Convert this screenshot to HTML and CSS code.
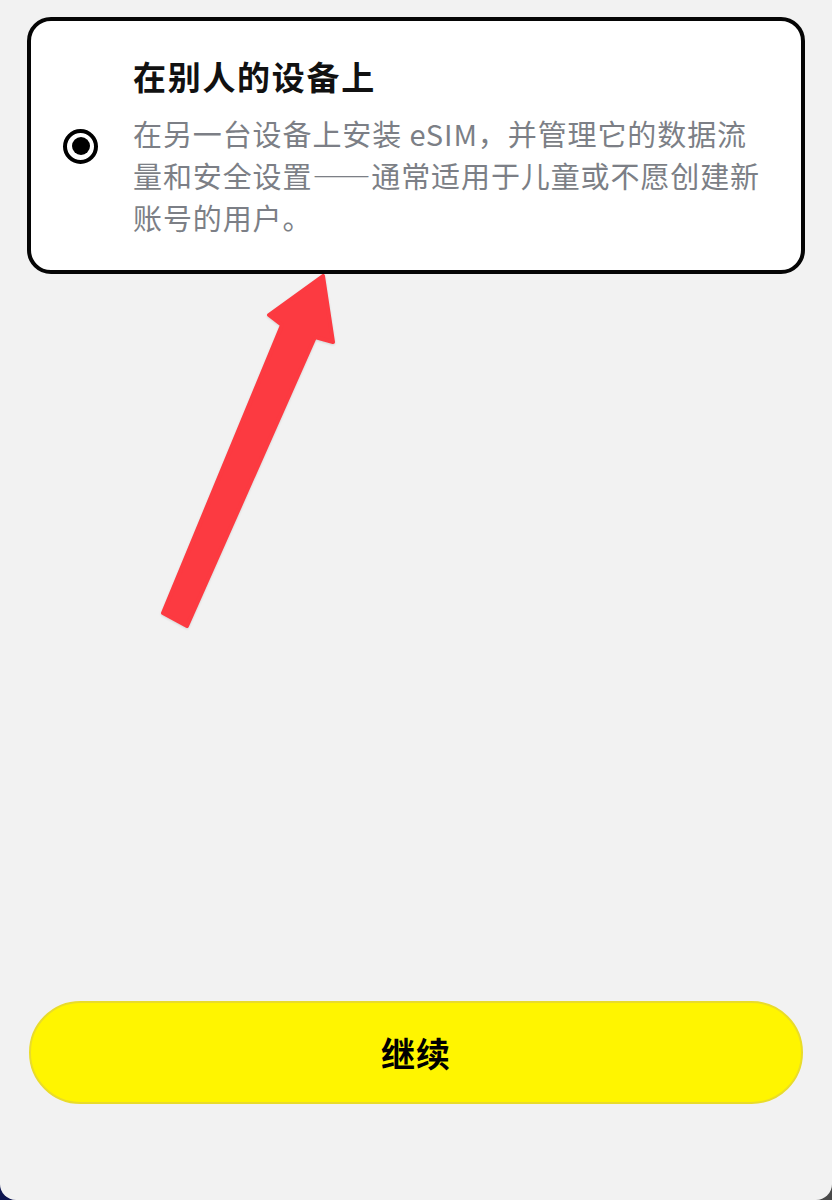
FILE: index.html
```html
<!DOCTYPE html>
<html lang="zh-CN">
<head>
<meta charset="utf-8">
<title>在别人的设备上</title>
<link rel="stylesheet" href="styles.css">
</head>
<body>
<div class="screen">
  <div class="card">
    <div class="radio"><div class="radio-dot"></div></div>
    <div class="card-text">
      <div class="card-title">在别人的设备上</div>
      <div class="card-desc">在另一台设备上安装 eSIM，并管理它的数据流量和安全设置——通常适用于儿童或不愿创建新账号的用户。</div>
    </div>
  </div>
  <svg class="arrow" width="832" height="700" viewBox="0 0 832 700" xmlns="http://www.w3.org/2000/svg">
    <polygon points="323,276 333,342 315,337 187,626 163,613 282,325 269,315" fill="#fc3a41" stroke="#fc3a41" stroke-width="4" stroke-linejoin="round"/>
  </svg>
  <div class="spacer"></div>
  <button class="continue">继续</button>
</div>
</body>
</html>
```

FILE: styles.css
```css
html, body {
  margin: 0;
  padding: 0;
}
body {
  background: linear-gradient(to right, #0d1550 0%, #0d1550 50%, #4a4a4a 50%, #4a4a4a 100%);
  font-family: "Noto Sans CJK SC", "Noto Sans", sans-serif;
}
.screen {
  position: relative;
  box-sizing: border-box;
  height: 1200px;
  background: #f2f2f2;
  border-bottom-left-radius: 16px;
  border-bottom-right-radius: 16px;
  display: flex;
  flex-direction: column;
  padding: 17px 27px 96px 27px;
  overflow: hidden;
}
.card {
  box-sizing: border-box;
  background: #ffffff;
  border: 4px solid #050505;
  border-radius: 24px;
  display: flex;
  align-items: center;
  padding: 31px 28px 30px 32px;
  gap: 35px;
  height: 257px;
}
.radio {
  box-sizing: border-box;
  flex: 0 0 35px;
  width: 35px;
  height: 35px;
  border: 4px solid #000;
  border-radius: 50%;
  display: flex;
  align-items: center;
  justify-content: center;
}
.radio-dot {
  width: 18px;
  height: 18px;
  border-radius: 50%;
  background: #000;
}
.card-text {
  flex: 1;
  display: flex;
  flex-direction: column;
  gap: 14px;
}
.card-title {
  font-size: 33px;
  line-height: 44px;
  font-weight: 700;
  color: #111111;
  letter-spacing: 1.7px;
}
.card-desc {
  font-size: 29px;
  line-height: 42px;
  color: #7c7f86;
  letter-spacing: 0.9px;
}
.arrow {
  position: absolute;
  left: 0;
  top: 0;
  pointer-events: none;
  filter: drop-shadow(0 1px 1px rgba(0,0,0,0.12));
}
.spacer {
  flex: 1;
}
.continue {
  box-sizing: border-box;
  margin: 0 2px;
  height: 103px;
  border: 2px solid #e9dc2a;
  border-radius: 52px;
  background: #fff500;
  font-family: "Noto Sans CJK SC", "Noto Sans", sans-serif;
  font-size: 34px;
  font-weight: 700;
  color: #000;
  letter-spacing: 1px;
  padding: 0;
}
```
